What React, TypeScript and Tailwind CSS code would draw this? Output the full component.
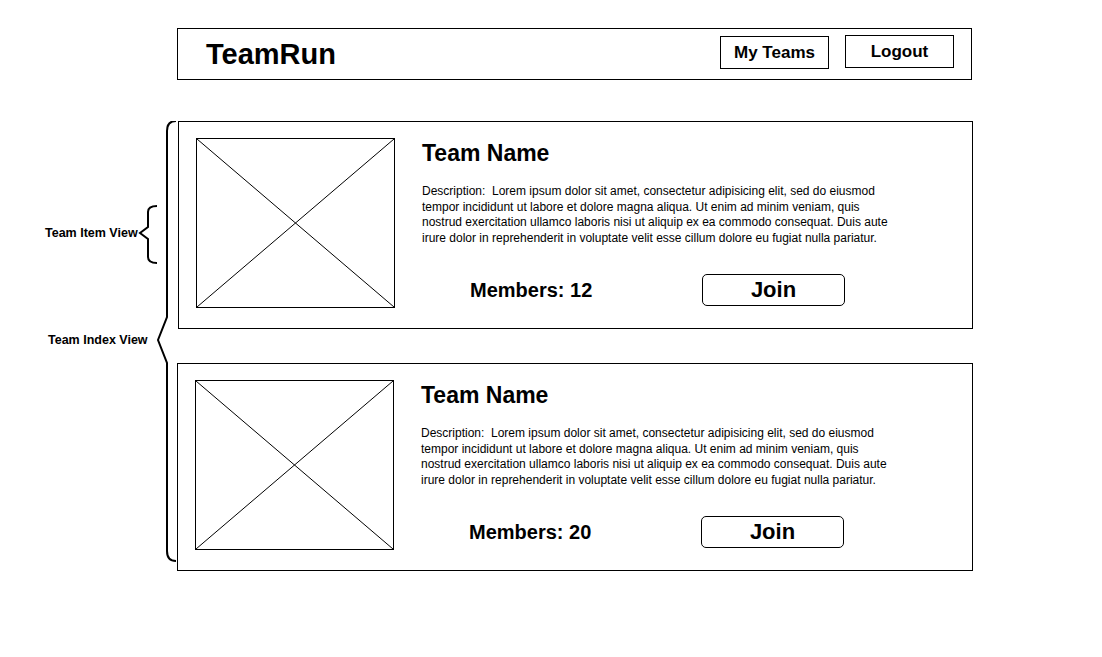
import React from "react";

const lorem =
  "Description:\u00a0\u00a0Lorem ipsum dolor sit amet, consectetur adipisicing elit, sed do eiusmod tempor incididunt ut labore et dolore magna aliqua. Ut enim ad minim veniam, quis nostrud exercitation ullamco laboris nisi ut aliquip ex ea commodo consequat. Duis aute irure dolor in reprehenderit in voluptate velit esse cillum dolore eu fugiat nulla pariatur.";

function Placeholder() {
  return (
    <div className="w-[199px] h-[170px] border border-black shrink-0">
      <svg className="w-full h-full" viewBox="0 0 197 168" preserveAspectRatio="none">
        <line x1="0" y1="0" x2="197" y2="168" stroke="black" strokeWidth="1" />
        <line x1="197" y1="0" x2="0" y2="168" stroke="black" strokeWidth="1" />
      </svg>
    </div>
  );
}

function TeamCard({ members, shift }: { members: number; shift?: boolean }) {
  return (
    <div className={"h-[208px] border border-black flex px-[17px] pt-[16px] " + (shift ? "ml-[1px]" : "")}>
      <Placeholder />
      <div className="ml-[27px] mt-[4px] flex flex-col">
        <h2 className="text-[23px] leading-[23px] font-bold">Team Name</h2>
        <p className="mt-[19px] w-[478px] text-[12px] leading-[15.5px]">{lorem}</p>
        <div className="mt-[28px] ml-[48px] flex items-center">
          <span className="w-[232px] text-[20px] leading-[20px] font-bold">
            Members: {members}
          </span>
          <button className="w-[143px] h-[32px] border border-black rounded-[5px] text-[22px] leading-[22px] font-bold">
            Join
          </button>
        </div>
      </div>
    </div>
  );
}

function Annotations() {
  return (
    <div className="relative w-[177px] h-[450px] shrink-0">
      <svg className="absolute inset-0" width="177" height="450" viewBox="0 0 177 450" fill="none">
        {/* big brace: y 121..561 on page */}
        <path
          d="M176 0 C170 0 167 3 167 10 L167 196 L158 219 L167 242 L167 430 C167 437 170 440 176 440"
          stroke="black"
          strokeWidth="2"
        />
        {/* small brace: y 206..263 on page */}
        <path
          d="M157 85 C151 85 148 87 148 91 L148 106 L140 112 L148 118 L148 136 C148 140 151 142 157 142"
          stroke="black"
          strokeWidth="2"
        />
      </svg>
      <span className="absolute left-[45px] top-[105px] text-[12.5px] leading-[14px] font-bold">
        Team Item View
      </span>
      <span className="absolute left-[48px] top-[212px] text-[12.5px] leading-[14px] font-bold">
        Team Index View
      </span>
    </div>
  );
}

export default function App() {
  return (
    <div className="min-h-[657px] bg-white text-black pt-[28px] font-['Liberation_Sans',Arial,sans-serif]">
      <header className="ml-[177px] w-[795px] h-[52px] border border-black flex pl-[28px] pr-[17px]">
        <h1 className="self-center text-[29px] leading-[29px] font-bold">TeamRun</h1>
        <div className="ml-auto flex items-start gap-[16px]">
          <button className="mt-[7px] w-[109px] h-[33px] border border-black text-[17px] font-bold">
            My Teams
          </button>
          <button className="mt-[6px] w-[109px] h-[33px] border border-black text-[17px] font-bold">
            Logout
          </button>
        </div>
      </header>
      <div className="mt-[41px] flex">
        <Annotations />
        <div className="w-[796px] flex flex-col gap-[34px]">
          <TeamCard members={12} shift />
          <TeamCard members={20} />
        </div>
      </div>
    </div>
  );
}
